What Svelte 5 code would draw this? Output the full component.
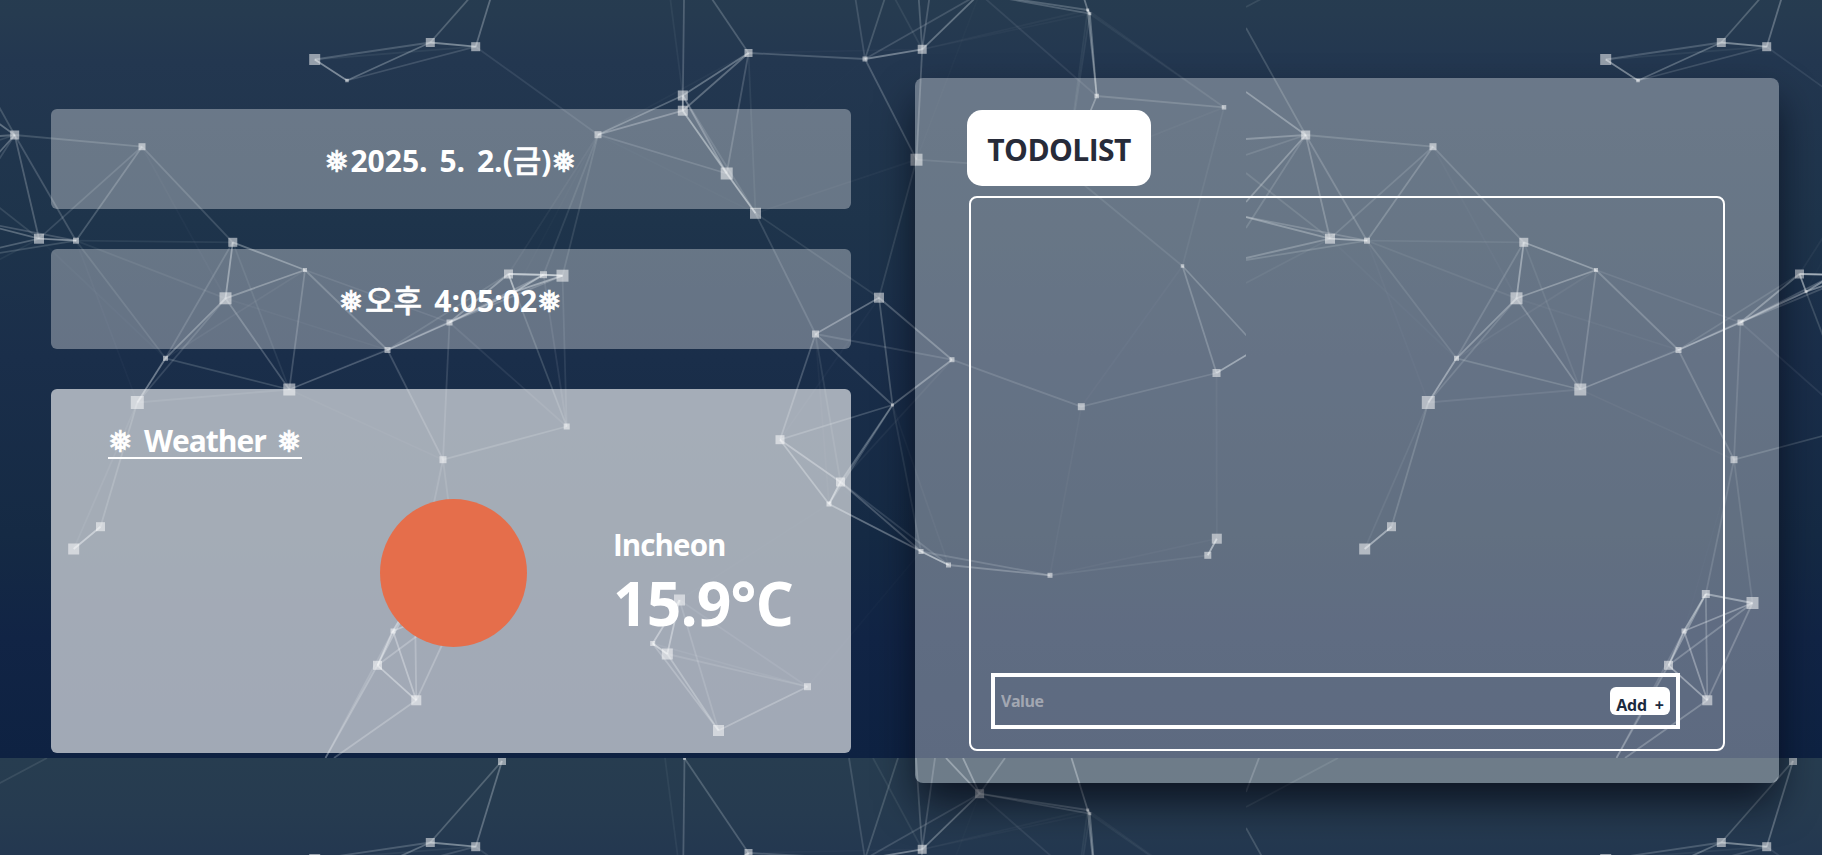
<script>
  // [x, y, size] of every particle in one background tile
  const nodes = [
    [314.7, 59.5, 11], [347, 80.5, 3.5], [430.3, 42.5, 9], [475.7, 46.7, 9], [14.7, 135, 9],
    [142, 146.7, 7], [39, 238.7, 10], [76, 240.7, 6], [232.8, 242.3, 9], [305, 270, 4],
    [225.5, 298.3, 12], [165.5, 358.3, 5], [289.3, 389.5, 12], [137.3, 402.5, 13], [387.5, 350, 6],
    [449.5, 322.5, 6], [508.5, 274, 9], [543.5, 274.7, 7], [562.5, 275.7, 12], [515, 291.7, 3],
    [598, 134.7, 7], [566.7, 426.5, 6], [748.5, 53, 8], [682.8, 95.5, 10], [682.8, 110.7, 10],
    [726.7, 173.5, 12], [755.5, 213.3, 11], [865, 59, 5], [922.2, 49.3, 9], [1087.7, 10, 3],
    [1089.8, 13.7, 3], [1096.7, 96, 4.5], [1224, 107.3, 4.5], [916.5, 159.7, 12], [879, 297.7, 10],
    [815.5, 334, 7], [952, 359.7, 5], [892.5, 405, 3], [1182.5, 266, 3.5], [1216.5, 373, 8],
    [1081.3, 406.7, 7], [780, 439.7, 9], [840.5, 482, 9], [829, 504, 5], [921, 551.5, 5],
    [948.5, 565, 5], [1050, 575.3, 5], [1216.8, 538.7, 10], [1207.8, 555.3, 7], [679.5, 600, 11],
    [652.7, 643.5, 5], [667.3, 654, 11], [807.5, 686.7, 7], [718.5, 730.5, 11], [100.5, 526.7, 9],
    [73.7, 549, 11], [443, 459.7, 7], [377.5, 665.3, 9], [416.3, 700.3, 10], [393, 631, 5],
    [414.8, 594, 8], [461.5, 603, 12], [502, -39, 8], [684.5, -41.7, 3], [979.6, -6.3, 9],
    [1066, 170, 5], [1258, 348, 8]
  ];
  // links that leave the tile: [x1, y1, x2, y2, opacity]
  const stubs = [
    [14.7, 135, -45, 92, .33], [14.7, 135, -45, 28, .18], [14.7, 135, -45, 139, .27],
    [14.7, 135, -45, 155, .12], [14.7, 135, -45, 202, .3], [14.7, 135, -45, 228, .15],
    [39, 238.7, -45, 217, .3], [39, 238.7, -45, 258, .25], [39, 238.7, -45, 173, .12],
    [39, 238.7, -45, 283, .06], [76, 240.7, -45, 217, .2], [76, 240.7, -45, 260, .17],
    [-45, 7, 47, -42, .1], [-32, -42, -45, -8, .2],
    [377.5, 665.3, 325.5, 758, .25], [393, 631, 325.5, 758, .15], [416.3, 700.3, 334, 758, .25],
    [865, 59, 898, -42, .18], [865, 59, 849, -42, .15], [922.2, 49.3, 916, -42, .22],
    [922.2, 49.3, 935, -42, .2], [922.2, 49.3, 873, -42, .08], [979.6, -6.3, 946, -42, .35],
    [979.6, -6.3, 963, -42, .35], [979.6, -6.3, 1005, -42, .25], [1087.7, 10, 1071.5, -42, .35],
    [682.8, 95.5, 665, -42, .06]
  ];
  const REACH = 182;
  const links = [...stubs];
  nodes.forEach((a, i) => {
    for (const b of nodes.slice(i + 1)) {
      const d = Math.hypot(a[0] - b[0], a[1] - b[1]);
      if (d < REACH) links.push([a[0], a[1], b[0], b[1], 0.58 * (1 - d / REACH)]);
    }
  });
  const tiles = [[0, 0], [1291, 0], [0, 800], [1291, 800]];
  let value = $state('');
</script>

<svg class="backdrop" width="1822" height="855" viewBox="0 0 1822 855" aria-hidden="true">
  <defs>
    <linearGradient id="night" x1="0" y1="0" x2="0" y2="1">
      <stop offset="0" stop-color="#273d50" />
      <stop offset=".07" stop-color="#263b50" />
      <stop offset=".13" stop-color="#233750" />
      <stop offset=".33" stop-color="#1e344b" />
      <stop offset=".5" stop-color="#1a2e4a" />
      <stop offset=".72" stop-color="#152a44" />
      <stop offset=".85" stop-color="#112445" />
      <stop offset="1" stop-color="#0e2242" />
    </linearGradient>
    <clipPath id="edge"><rect x="-45" y="-42" width="1291" height="800" /></clipPath>
    <g id="tile" clip-path="url(#edge)">
      <rect x="-45" y="-42" width="1291" height="800" fill="url(#night)" />
      {#each links as [x1, y1, x2, y2, o]}
        <line {x1} {y1} {x2} {y2} stroke="#e4ecf0" stroke-width="1.8" stroke-opacity={o} />
      {/each}
      {#each nodes as [x, y, s]}
        <rect x={x - s / 2} y={y - s / 2} width={s} height={s} fill="#fff" fill-opacity=".52" />
      {/each}
    </g>
  </defs>
  {#each tiles as [x, y]}
    <use href="#tile" {x} {y} />
  {/each}
</svg>

<main>
  <section class="left">
    <div class="card"><span class="date"><i>❅</i>2025. 5. 2.(<b>금</b>)<i>❅</i></span></div>
    <div class="card"><span class="time"><i>❅</i><b>오후</b> 4:05:02<i>❅</i></span></div>
    <div class="weather">
      <h2><i>❅</i> <span>Weather</span> <i>❅</i></h2>
      <div class="now">
        <div class="sun"></div>
        <div class="info">
          <div class="city">Incheon</div>
          <div class="temp">15.9°C</div>
        </div>
      </div>
    </div>
  </section>
  <section class="todo">
    <h1>TODOLIST</h1>
    <div class="list">
      <form onsubmit={(e) => e.preventDefault()}>
        <input placeholder="Value" bind:value />
        <button>Add +</button>
      </form>
    </div>
  </section>
</main>

<style>
  :global(body) { margin: 0; overflow: hidden; background: #0e2242; }
  .backdrop { position: absolute; inset: 0; z-index: -1; display: block; }
  main, input, button { font-family: "Open Sans", "Noto Sans CJK KR", "DejaVu Sans", sans-serif; font-weight: 700; }
  main {
    box-sizing: border-box; width: 1822px; height: 855px; padding: 78px 43px 0 51px;
    display: flex; justify-content: space-between; color: #fff;
  }
  .left { width: 800px; padding-top: 31px; display: flex; flex-direction: column; gap: 40px; }
  .card {
    height: 100px; border-radius: 6px; background: rgba(255, 255, 255, .33);
    display: flex; justify-content: center; align-items: center;
    font-size: 30px; line-height: 40px; white-space: pre;
  }
  .card span { padding-top: 4px; }
  .card b { font-size: 31px; line-height: 1; font-weight: 500; -webkit-text-stroke: .5px #fff; }
  i { font-style: normal; -webkit-text-stroke: .7px #fff; }
  .card i { letter-spacing: .9px; }
  .date { word-spacing: 4px; }
  .time { word-spacing: 4.5px; }
  .weather { box-sizing: border-box; height: 364px; border-radius: 6px; background: rgba(255, 255, 255, .61); padding: 32px 57px; }
  h2 { margin: 0; width: max-content; padding-top: 4px; font-size: 30px; line-height: 32px; font-weight: 700; border-bottom: 2px solid #fff; white-space: pre; word-spacing: 3px; }
  h2 span { letter-spacing: -1px; }
  .now { display: flex; padding: 40px 0 0 272px; gap: 86px; }
  .sun { flex: none; width: 147px; height: 148px; border-radius: 50%; background: #e56e4b; }
  .info { padding-top: 27px; white-space: nowrap; }
  .city { font-size: 29.5px; line-height: 38px; letter-spacing: -.9px; }
  .temp { font-size: 60.5px; line-height: 77px; letter-spacing: -.9px; }
  .todo {
    box-sizing: border-box; width: 864px; height: 705px; border-radius: 8px; padding: 32px 52px 0;
    background: rgba(255, 255, 255, .33);
    box-shadow: 0 21px 40px -3px rgba(4, 6, 18, .76);
  }
  h1 {
    margin: 0; box-sizing: border-box; width: 184px; height: 76px; border-radius: 15px; background: #fff;
    color: #272b39; text-align: center; font-size: 30px; line-height: 80px; font-weight: 700; letter-spacing: -.6px;
  }
  .list {
    box-sizing: border-box; width: 756px; height: 555px; margin: 10px 0 0 2px; padding: 0 20px 20px;
    border: 2px solid #fff; border-radius: 8px; display: flex; align-items: flex-end;
  }
  form { box-sizing: border-box; width: 689px; height: 56px; border: 4px solid #fff; display: flex; align-items: center; padding: 0 6px; }
  input { flex: 1; min-width: 0; padding: 0; border: 0; outline: 0; background: none; color: #fff; font-size: 16px; letter-spacing: -.5px; }
  input::placeholder { color: #a2a7b2; opacity: 1; }
  button { width: 60px; height: 28px; padding: 8px 0 0; border: 0; border-radius: 6px; background: #fff; color: #1b2a40; font-size: 16px; line-height: 20px; white-space: pre; letter-spacing: -.2px; word-spacing: 4px; }
</style>
